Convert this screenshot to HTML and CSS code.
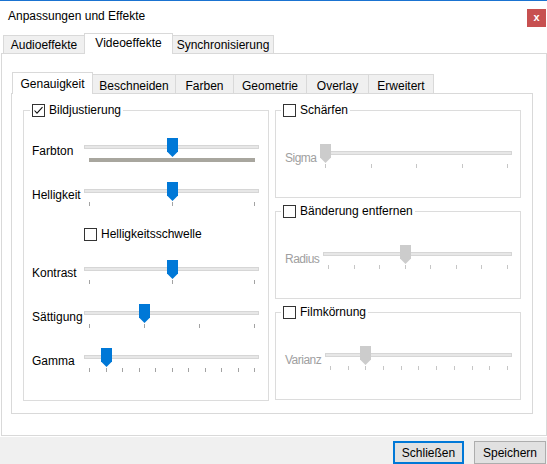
FILE: index.html
```html
<!DOCTYPE html>
<html lang="de">
<head>
<meta charset="utf-8">
<title>Anpassungen und Effekte</title>
<link rel="stylesheet" href="styles.css">
</head>
<body>
<div class="window">
  <div class="titlebar">
    <span class="title">Anpassungen und Effekte</span>
    <span class="close">x</span>
  </div>

  <div class="tabbar outer-tabs">
    <div class="tab w-audio">Audioeffekte</div>
    <div class="tab active w-video">Videoeffekte</div>
    <div class="tab w-sync">Synchronisierung</div>
  </div>

  <div class="outer-panel">
    <div class="tabbar inner-tabs">
      <div class="tab active w-gen">Genauigkeit</div>
      <div class="tab w-besch">Beschneiden</div>
      <div class="tab w-farb">Farben</div>
      <div class="tab w-geo">Geometrie</div>
      <div class="tab w-over">Overlay</div>
      <div class="tab w-erw">Erweitert</div>
    </div>

    <div class="inner-panel">
      <div class="group left-group">
        <div class="group-title">
          <span class="cb"><svg viewBox="0 0 11 11" width="11" height="11"><polyline points="1.5,5.5 4,8.2 9.5,2.2" fill="none" stroke="#111" stroke-width="1.1"/></svg></span>
          <span>Bildjustierung</span>
        </div>
        <div class="rows">
          <div class="row">
            <span class="label">Farbton</span>
            <div class="slider fixed" style="--v:0.5">
              <div class="groove"><div class="track"></div></div>
              <div class="hue"></div>
              <svg class="thumb" viewBox="0 0 11 19" width="11" height="19"><path d="M0 0H11V13.5L5.5 19L0 13.5Z"/></svg>
            </div>
          </div>
          <div class="row">
            <span class="label">Helligkeit</span>
            <div class="slider fixed" style="--v:0.5">
              <div class="groove"><div class="track"></div></div>
              <div class="ticks"><i></i><i></i><i></i></div>
              <svg class="thumb" viewBox="0 0 11 19" width="11" height="19"><path d="M0 0H11V13.5L5.5 19L0 13.5Z"/></svg>
            </div>
          </div>
          <div class="cbrow">
            <span class="cb"></span>
            <span>Helligkeitsschwelle</span>
          </div>
          <div class="row">
            <span class="label">Kontrast</span>
            <div class="slider fixed" style="--v:0.5">
              <div class="groove"><div class="track"></div></div>
              <div class="ticks"><i></i><i></i><i></i></div>
              <svg class="thumb" viewBox="0 0 11 19" width="11" height="19"><path d="M0 0H11V13.5L5.5 19L0 13.5Z"/></svg>
            </div>
          </div>
          <div class="row">
            <span class="label">Sättigung</span>
            <div class="slider fixed" style="--v:0.3333">
              <div class="groove"><div class="track"></div></div>
              <div class="ticks"><i></i><i></i><i></i><i></i></div>
              <svg class="thumb" viewBox="0 0 11 19" width="11" height="19"><path d="M0 0H11V13.5L5.5 19L0 13.5Z"/></svg>
            </div>
          </div>
          <div class="row">
            <span class="label">Gamma</span>
            <div class="slider fixed" style="--v:0.1">
              <div class="groove"><div class="track"></div></div>
              <div class="ticks"><i></i><i></i><i></i><i></i><i></i><i></i><i></i><i></i><i></i><i></i><i></i></div>
              <svg class="thumb" viewBox="0 0 11 19" width="11" height="19"><path d="M0 0H11V13.5L5.5 19L0 13.5Z"/></svg>
            </div>
          </div>
        </div>
      </div>

      <div class="right-col">
        <div class="group rgroup">
          <div class="group-title">
            <span class="cb"></span>
            <span>Schärfen</span>
          </div>
          <div class="srow">
            <span class="label disabled lw-sigma">Sigma</span>
            <div class="slider off" style="--v:0">
              <div class="groove"><div class="track"></div></div>
              <div class="ticks"><i></i><i></i><i></i><i></i><i></i></div>
              <svg class="thumb" viewBox="0 0 11 19" width="11" height="19"><path d="M0 0H11V13.5L5.5 19L0 13.5Z"/></svg>
            </div>
          </div>
        </div>
        <div class="group rgroup">
          <div class="group-title">
            <span class="cb"></span>
            <span>Bänderung entfernen</span>
          </div>
          <div class="srow">
            <span class="label disabled lw-radius">Radius</span>
            <div class="slider off" style="--v:0.4286">
              <div class="groove"><div class="track"></div></div>
              <div class="ticks"><i></i><i></i><i></i><i></i><i></i><i></i><i></i><i></i></div>
              <svg class="thumb" viewBox="0 0 11 19" width="11" height="19"><path d="M0 0H11V13.5L5.5 19L0 13.5Z"/></svg>
            </div>
          </div>
        </div>
        <div class="group rgroup last">
          <div class="group-title">
            <span class="cb"></span>
            <span>Filmkörnung</span>
          </div>
          <div class="srow">
            <span class="label disabled lw-varianz">Varianz</span>
            <div class="slider off" style="--v:0.2">
              <div class="groove"><div class="track"></div></div>
              <div class="ticks"><i></i><i></i><i></i><i></i><i></i><i></i><i></i><i></i><i></i><i></i><i></i></div>
              <svg class="thumb" viewBox="0 0 11 19" width="11" height="19"><path d="M0 0H11V13.5L5.5 19L0 13.5Z"/></svg>
            </div>
          </div>
        </div>
      </div>
    </div>
  </div>

  <div class="buttonbar">
    <button class="btn default w-close">Schließen</button>
    <button class="btn w-save">Speichern</button>
  </div>
</div>
</body>
</html>
```

FILE: styles.css
```css
* { box-sizing: border-box; }

html, body {
  margin: 0;
  padding: 0;
  background: #ffffff;
}

body {
  font-family: "Liberation Sans", Arial, sans-serif;
  font-size: 12px;
  color: #000;
}

.window {
  width: 547px;
  height: 464px;
  background: #ffffff;
  overflow: hidden;
}

/* ---------- title bar ---------- */
.titlebar {
  height: 33px;
  border-top: 1px solid #1a73d1;
  display: flex;
  align-items: flex-start;
  padding-left: 8px;
}

.title {
  margin-top: 8px;
  line-height: 15px;
}

.close {
  margin-left: auto;
  margin-top: 8px;
  margin-right: 1px;
  width: 19px;
  height: 18px;
  background: #c75050;
  color: #fff;
  font-size: 11px;
  font-weight: bold;
  line-height: 17px;
  text-align: center;
}

/* ---------- tabs ---------- */
.tabbar {
  display: flex;
  align-items: flex-end;
  position: relative;
  z-index: 1;
  margin-bottom: -1px;
}

.tab {
  border: 1px solid #d9d9d9;
  background: #f0f0f0;
  text-align: center;
  line-height: 14px;
  white-space: nowrap;
}

.tab + .tab { margin-left: -1px; }

.tab.active {
  background: #ffffff;
  border-bottom: none;
  position: relative;
  z-index: 2;
}

.outer-tabs {
  height: 21px;
  padding-left: 3px;
}

.outer-tabs .tab {
  height: 19px;
  padding-top: 2px;
}

.outer-tabs .tab.active {
  height: 21px;
  padding-top: 2px;
}

.inner-tabs {
  height: 22px;
  padding-left: 1px;
}

.inner-tabs .tab {
  height: 20px;
  padding-top: 4px;
}

.inner-tabs .tab.active {
  height: 22px;
  padding-top: 4px;
}

.w-audio { width: 82px; }
.w-video { width: 89px; }
.w-sync  { width: 102px; }

.w-gen   { width: 81px; }
.w-besch { width: 84px; }
.w-farb  { width: 59px; }
.w-geo   { width: 74px; }
.w-over  { width: 63px; }
.w-erw   { width: 66px; }

/* ---------- panels ---------- */
.outer-panel {
  margin-left: 1px;
  width: 546px;
  height: 383px;
  border: 1px solid #d9d9d9;
  background: #ffffff;
  padding: 18px 0 0 9px;
}

.inner-panel {
  width: 522px;
  height: 321px;
  border: 1px solid #d9d9d9;
  background: #ffffff;
  padding: 16px 0 0 11px;
  display: flex;
  align-items: flex-start;
  gap: 6px;
}

/* ---------- group boxes ---------- */
.group {
  border: 1px solid #dcdcdc;
  width: 246px;
}

.left-group {
  height: 291px;
  padding-left: 8px;
}

.group-title {
  display: flex;
  align-items: center;
  gap: 4px;
  height: 13px;
  margin-top: -7px;
  background: #fff;
  width: max-content;
  padding: 0 2px;
  line-height: 13px;
}

.left-group .group-title { margin-left: -2px; }

.cb {
  width: 13px;
  height: 13px;
  border: 1px solid #333333;
  background: #ffffff;
  display: flex;
  align-items: center;
  justify-content: center;
  flex: none;
}

.cb svg { display: block; }

.rows {
  margin-top: 21px;
  display: flex;
  flex-direction: column;
  gap: 20px;
}

.row {
  display: flex;
}

.label {
  padding-top: 6px;
  line-height: 15px;
  white-space: nowrap;
}

.row .label { width: 52px; flex: none; }

.cbrow {
  display: flex;
  align-items: center;
  gap: 4px;
  height: 13px;
  line-height: 13px;
  margin-left: 52px;
  margin-top: 2px;
  margin-bottom: -1px;
}

/* ---------- sliders ---------- */
.slider {
  position: relative;
  height: 24px;
}

.slider.fixed { width: 175px; flex: none; }

.groove { height: 19px; padding-top: 7px; }

.track {
  height: 4px;
  background: #e7e7e7;
  border: 1px solid #d6d6d6;
}

.ticks {
  margin-top: 1px;
  height: 4px;
  padding: 0 4px 0 5px;
  display: flex;
  justify-content: space-between;
}

.ticks i {
  display: block;
  width: 1px;
  height: 4px;
  background: #a3a3a3;
}

.hue {
  margin: 1px 4px 0 5px;
  height: 4px;
  background: #a8a69e;
}

.thumb {
  position: absolute;
  top: 0;
  left: calc(var(--v) * (100% - 10px));
  fill: #0078d7;
  display: block;
}

.slider.off .thumb { fill: #cccccc; }
.slider.off .ticks i { background: #c6c6c6; }

/* ---------- right groups ---------- */
.right-col {
  width: 246px;
  display: flex;
  flex-direction: column;
  gap: 13px;
}

.rgroup { height: 88px; }
.rgroup.last { height: 88px; }

.rgroup .group-title { margin-left: 5px; }

.srow {
  display: flex;
  gap: 6px;
  margin-top: 27px;
  padding-left: 9px;
  padding-right: 8px;
}

.srow .label { padding-top: 7px; flex: none; letter-spacing: -0.5px; }

.lw-sigma   { width: 29px; }
.lw-radius  { width: 32px; }
.lw-varianz { width: 34px; }

.srow .slider { flex: 1; }

.label.disabled { color: #a0a0a0; }

/* ---------- button bar ---------- */
.buttonbar {
  height: 28px;
  margin-top: 1px;
  background: #f0f0f0;
  display: flex;
  justify-content: flex-end;
  align-items: flex-start;
  gap: 10px;
  padding-top: 4px;
  padding-right: 1px;
}

.btn {
  height: 23px;
  background: #e1e1e1;
  border: 1px solid #adadad;
  font-family: inherit;
  font-size: 12px;
  color: #000;
  padding: 0;
  margin: 0;
}

.btn.default { border: 2px solid #0078d7; }

.w-close { width: 71px; }
.w-save  { width: 72px; }
```
